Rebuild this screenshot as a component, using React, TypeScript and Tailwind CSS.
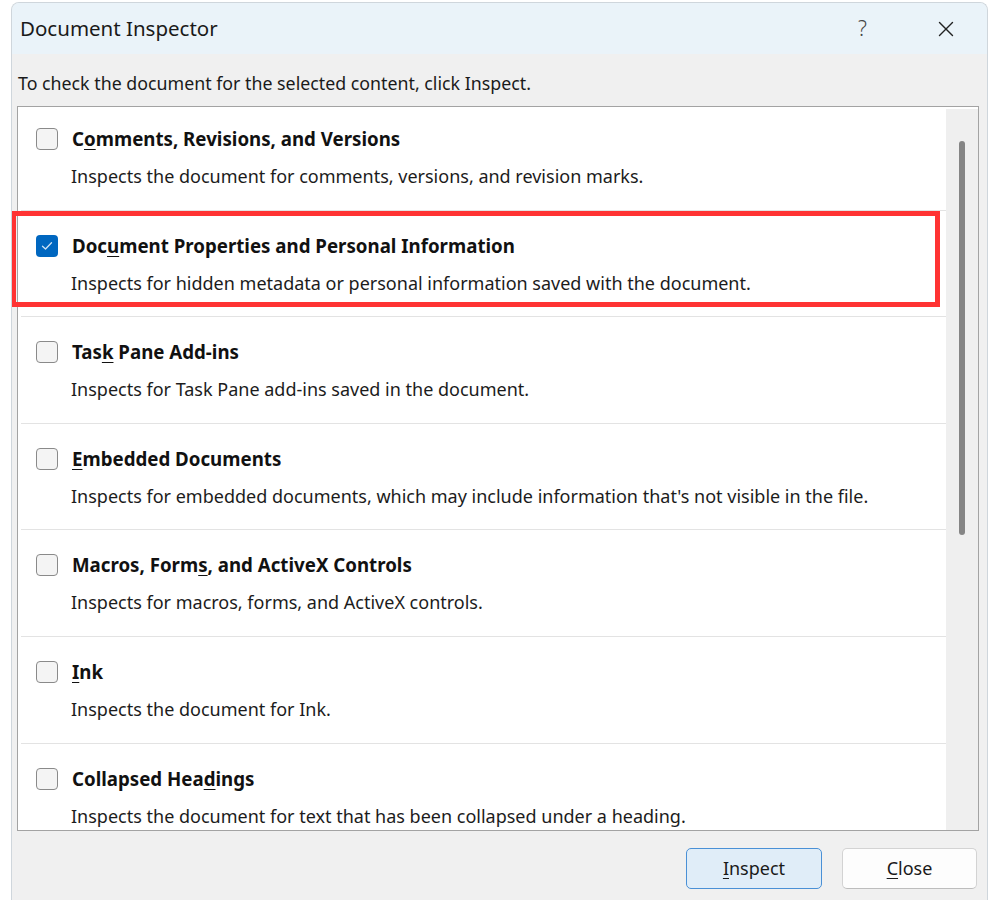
import { X } from 'lucide-react';
import type { ReactNode } from 'react';

/**
 * Document Inspector dialog
 *
 * Windows-style modal listing inspection categories with
 * checkboxes, a scrollable list box and Inspect / Close buttons.
 */

interface InspectItem {
  title: ReactNode;
  description: string;
  checked?: boolean;
}

// Underlined access-key letter
function Key({ children }: { children: ReactNode }) {
  return <span className="underline decoration-1 underline-offset-[3px]">{children}</span>;
}

const items: InspectItem[] = [
  {
    title: <>C<Key>o</Key>mments, Revisions, and Versions</>,
    description: 'Inspects the document for comments, versions, and revision marks.',
  },
  {
    title: <>Doc<Key>u</Key>ment Properties and Personal Information</>,
    description: 'Inspects for hidden metadata or personal information saved with the document.',
    checked: true,
  },
  {
    title: <>Tas<Key>k</Key> Pane Add-ins</>,
    description: 'Inspects for Task Pane add-ins saved in the document.',
  },
  {
    title: <><Key>E</Key>mbedded Documents</>,
    description: "Inspects for embedded documents, which may include information that's not visible in the file.",
  },
  {
    title: <>Macros, Form<Key>s</Key>, and ActiveX Controls</>,
    description: 'Inspects for macros, forms, and ActiveX controls.',
  },
  {
    title: <><Key>I</Key>nk</>,
    description: 'Inspects the document for Ink.',
  },
  {
    title: <>Collapsed Hea<Key>d</Key>ings</>,
    description: 'Inspects the document for text that has been collapsed under a heading.',
  },
];

function Checkbox({ checked }: { checked?: boolean }) {
  if (checked) {
    return (
      <div className="flex h-[22px] w-[22px] shrink-0 items-center justify-center rounded-[4px] bg-[#0067c0]">
        <svg width="12" height="10" viewBox="0 0 12 10" fill="none">
          <path d="M1.5 5.2 L4.5 8 L10.5 1.8" stroke="#cfe3f5" strokeWidth="1.3" strokeLinecap="round" strokeLinejoin="round" />
        </svg>
      </div>
    );
  }
  return <div className="h-[22px] w-[22px] shrink-0 rounded-[4px] border-[1.5px] border-[#8a8a8a] bg-[#f4f4f4]" />;
}

function ItemRow({ item }: { item: InspectItem }) {
  return (
    <div className="relative h-[106.6px] shrink-0">
      <div className="flex items-center pl-[18px] pt-[23px]">
        <Checkbox checked={item.checked} />
        <div className="ml-[14px] text-[18.7px] font-bold leading-[24px] text-[#111]">{item.title}</div>
      </div>
      <div className="mt-[13px] pl-[53px] text-[18px] leading-[24px] text-[#1c1c1c]">{item.description}</div>
      <div className="absolute bottom-0 left-[3px] right-0 h-px bg-[#e3e3e3]" />
    </div>
  );
}

export default function App() {
  return (
    <div className="min-h-[900px] bg-white pl-[11px] pt-[2px] font-['Noto_Sans',sans-serif]">
      <div className="flex h-[898px] w-[977px] flex-col overflow-hidden rounded-t-[8px] border-l border-t border-r border-[#cfd6dc] bg-[#f0f0f0]">
        {/* Title bar */}
        <div className="flex h-[51px] shrink-0 items-center bg-[#eaf3f9] pl-[8px]">
          <span className="text-[20.5px] text-[#1a1a1a]">Document Inspector</span>
          <span className="ml-auto mr-[66px] text-[21px] font-light text-[#444]">?</span>
          <X className="mr-[28px] h-[26px] w-[26px] text-[#222]" strokeWidth={1.3} />
        </div>

        {/* Instruction */}
        <div className="pl-[6px] pt-[17px] text-[17.8px] leading-[24px] text-[#1a1a1a]">
          To check the document for the selected content, click Inspect.
        </div>

        {/* List box */}
        <div className="relative ml-[5px] mt-[11px] flex h-[725px] w-[962px] border border-[#a3a3a3] bg-white">
          <div className="flex min-w-0 flex-1 flex-col overflow-hidden">
            <div className="-mt-[3px] flex flex-col">
              {items.map((item, i) => (
                <ItemRow key={i} item={item} />
              ))}
            </div>
          </div>
          {/* Scrollbar */}
          <div className="mt-[2px] flex w-[32px] shrink-0 justify-center bg-[#efefef] pr-[1px]">
            <div className="mt-[32px] h-[394px] w-[6px] rounded-full bg-[#858585]" />
          </div>
          {/* Highlight frame around the selected category */}
          <div className="pointer-events-none absolute left-[-7px] top-[104px] h-[96px] w-[929px] border-[5px] border-[#ff3333]" />
        </div>

        {/* Buttons */}
        <div className="mt-[17px] flex justify-end gap-[20px] pr-[10px]">
          <button className="h-[41px] w-[136px] rounded-[5px] border border-[#4a90d6] bg-[#e0edf8] text-[18px] text-[#1a1a1a]">
            <Key>I</Key>nspect
          </button>
          <button className="h-[41px] w-[135px] rounded-[5px] border border-[#d3d3d3] border-b-[#bdbdbd] bg-[#fdfdfd] text-[18px] text-[#1a1a1a]">
            <Key>C</Key>lose
          </button>
        </div>
      </div>
    </div>
  );
}
